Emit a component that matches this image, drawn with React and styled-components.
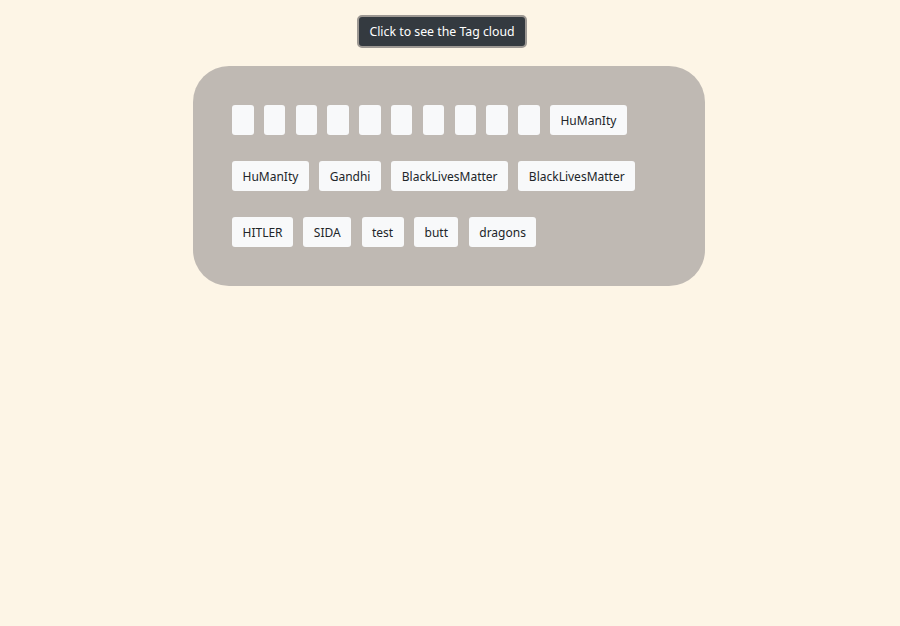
import React from 'react';
import styled, { createGlobalStyle } from 'styled-components';

const GlobalStyle = createGlobalStyle`
  body {
    margin: 0;
    background-color: #fdf5e6;
    font-family: "Noto Sans", "Open Sans", sans-serif;
  }
`;

const Page = styled.div`
  display: flex;
  flex-direction: column;
  align-items: center;
  padding-top: 15px;
`;

const ToggleButton = styled.button`
  margin-right: 16px;
  height: 33px;
  padding: 0 10px;
  border: 2px solid #9d9893;
  border-radius: 5px;
  background-color: #343a40;
  color: #fff;
  font-family: inherit;
  font-size: 12.3px;
  line-height: 30px;
  cursor: pointer;
`;

const Cloud = styled.div`
  box-sizing: border-box;
  width: 512px;
  margin-top: 18px;
  margin-right: 2px;
  padding: 39px;
  border-radius: 36px;
  background-color: #bfb9b3;
  display: flex;
  flex-wrap: wrap;
  column-gap: 10.3px;
  row-gap: 26px;
`;

const Tag = styled.button`
  height: 30px;
  min-width: 21.5px;
  padding: 0 10.5px;
  border: none;
  border-radius: 3px;
  background-color: #f8f9fa;
  color: #212529;
  font-family: inherit;
  font-size: 12px;
  line-height: 31px;
`;

const tags = ['', '', '', '', '', '', '', '', '', '', 'HuManIty', 'HuManIty', 'Gandhi',
  'BlackLivesMatter', 'BlackLivesMatter', 'HITLER', 'SIDA', 'test', 'butt', 'dragons'];

const App = () => {
  return (
    <Page>
      <GlobalStyle />
      <ToggleButton>Click to see the Tag cloud</ToggleButton>
      <Cloud>
        {tags.map((t, i) => <Tag key={i}>{t}</Tag>)}
      </Cloud>
    </Page>
  );
}

export default App;
